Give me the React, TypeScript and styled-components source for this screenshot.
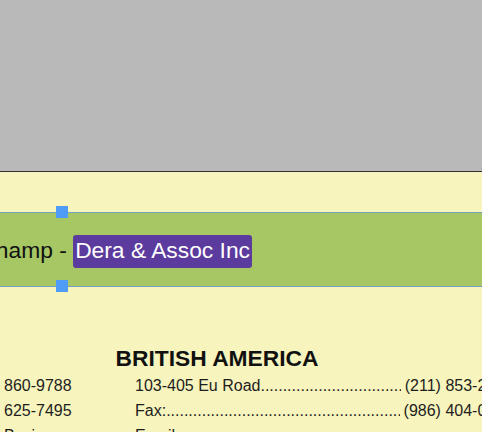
import React from "react";
import styled, { createGlobalStyle } from "styled-components";

const GlobalStyle = createGlobalStyle`
  html, body {
    margin: 0;
    padding: 0;
    background: #f7f4bd;
    overflow: hidden;
  }

  body {
    font-family: "Liberation Sans", Arial, sans-serif;
    color: #111;
  }
`;

interface Contact {
  left: string;
  label: string;
  phone: string;
}

const contacts: Contact[] = [
  { left: "860-9788", label: "103-405 Eu Road", phone: "(211) 853-2947" },
  { left: "625-7495", label: "Fax:", phone: "(986) 404-0312" },
  { left: "Business", label: "Email:", phone: "ornare.vuacas" },
];

const App = () => {
  return (
    <Page>
      <GlobalStyle />
      <Toolbar />
      <SelectedBand>
        <Handle $edge="top" />
        <TitleRow>
          <TitleText>Beauchamp - </TitleText>
          <Highlight>Dera &amp; Assoc Inc</Highlight>
        </TitleRow>
        <Handle $edge="bottom" />
      </SelectedBand>
      <Section>
        <Heading>BRITISH AMERICA</Heading>
        <ContactGrid>
          {contacts.map((c) => (
            <React.Fragment key={c.label}>
              <LeftCell>{c.left}</LeftCell>
              <RightCell>
                <Label>{c.label}</Label>
                <Leader />
                <Phone>{c.phone}</Phone>
              </RightCell>
            </React.Fragment>
          ))}
        </ContactGrid>
      </Section>
    </Page>
  );
};

const Page = styled.div`
  width: 482px;
  height: 432px;
  overflow: hidden;
  background: #f7f4bd;
`;

const Toolbar = styled.div`
  height: 171px;
  background: #b9b9b9;
  border-bottom: 1px solid #2e2e2e;
`;

const SelectedBand = styled.div`
  position: relative;
  margin-top: 40px;
  padding-top: 22px;
  height: 51px;
  background: #a6c764;
  border-top: 1px solid #74a1c0;
  border-bottom: 1px solid #74a1c0;
`;

const Handle = styled.div<{ $edge: "top" | "bottom" }>`
  position: absolute;
  left: 56px;
  width: 12px;
  height: 12px;
  background: #4f9cf6;
  ${({ $edge }) => ($edge === "top" ? "top: -7px;" : "bottom: -6px;")}
`;

const TitleRow = styled.div`
  width: 252px;
  display: flex;
  justify-content: flex-end;
  align-items: baseline;
  white-space: nowrap;
  font-size: 22.8px;
`;

const TitleText = styled.span`
  line-height: 26px;
  white-space: pre;
  color: #111;
`;

const Highlight = styled.span`
  line-height: 26px;
  padding: 2px 2px 5px;
  background: #5b3b9d;
  color: #fff;
  border-radius: 3px;
`;

const Section = styled.div`
  margin-top: 58px;
`;

const Heading = styled.h2`
  width: 434px;
  margin: 0 0 2px;
  text-align: center;
  font-size: 22.8px;
  line-height: 26px;
  font-weight: bold;
  color: #111;
`;

const ContactGrid = styled.div`
  display: grid;
  grid-template-columns: 131px 378px;
  padding-left: 4px;
  font-size: 16px;
  line-height: 25px;
  color: #1e1e1e;
`;

const LeftCell = styled.div`
  white-space: nowrap;
`;

const RightCell = styled.div`
  display: flex;
  white-space: nowrap;
`;

const Label = styled.span`
  flex: none;
`;

const Leader = styled.span`
  flex: 1;
  overflow: hidden;
  white-space: nowrap;

  &::after {
    content: "................................................................................................";
  }
`;

const Phone = styled.span`
  flex: none;
  margin-left: 4px;
`;

export default App;
